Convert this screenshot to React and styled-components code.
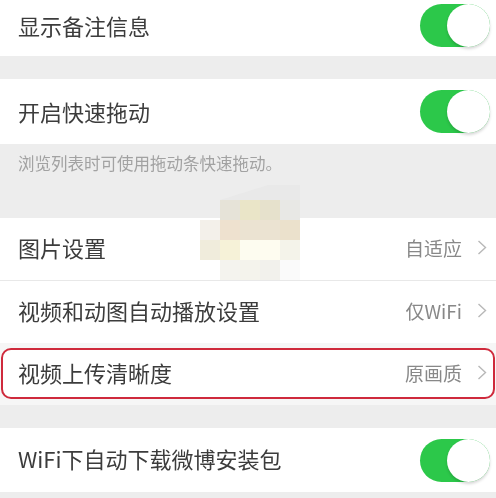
import React from "react";
import styled, { createGlobalStyle } from "styled-components";

const GlobalStyle = createGlobalStyle`
  html, body {
    margin: 0;
    padding: 0;
    background: #ededed;
  }
  body {
    font-family: "Noto Sans CJK SC", "Liberation Sans", sans-serif;
  }
`;

const Page = styled.div`
  position: relative;
  width: 496px;
  height: 498px;
  overflow: hidden;
  background: #ededed;
  filter: blur(0.55px);
`;

const Row = styled.div`
  height: ${(p) => p.$height}px;
  margin-top: ${(p) => p.$gap || 0}px;
  padding: 0 18px ${(p) => p.$lift || 0}px;
  background: #fff;
  display: flex;
  align-items: center;
  justify-content: space-between;
  box-sizing: border-box;
  border-bottom: ${(p) => (p.$line ? "1px solid #e8e8e8" : "none")};
`;

const FrameBand = styled.div`
  height: 62px;
  padding: 5px 1px 6px;
  box-sizing: border-box;
  background: #f6f6f6;
`;

const Frame = styled.div`
  height: 100%;
  padding: 0 15px;
  box-sizing: border-box;
  display: flex;
  align-items: center;
  justify-content: space-between;
  background: #fff;
  border: 2px solid #cf2a3c;
  border-radius: 10px;
`;

const Label = styled.span`
  font-size: 22px;
  color: #3c3c3c;
  margin-bottom: ${(p) => p.$raise ?? 4}px;
`;

const Caption = styled.div`
  height: 74px;
  padding: 7px 18px 0;
  box-sizing: border-box;
  font-size: 16.5px;
  line-height: 24px;
  color: #a2a2a2;
`;

const Value = styled.div`
  display: flex;
  align-items: center;
  gap: 15px;
  margin-right: -9px;
  margin-bottom: 3px;
  font-size: 19px;
  color: #888;
`;

const Chevron = styled.svg`
  width: 10px;
  height: 15px;
  fill: none;
  stroke: #b8b8b8;
  stroke-width: 1.4;
`;

const Track = styled.div`
  position: relative;
  width: 70px;
  height: 43px;
  margin-right: -12px;
  border-radius: 22px;
  background: #2cc84a;
`;

const Knob = styled.div`
  position: absolute;
  top: 0;
  right: 0;
  width: 43px;
  height: 43px;
  border-radius: 50%;
  background: #fff;
  box-shadow: 0 2px 3px rgba(0, 0, 0, 0.16);
`;

const Mosaic = styled.div`
  position: absolute;
  left: 200px;
  top: 200px;
  display: grid;
  grid-template-columns: repeat(5, 20px);
  grid-auto-rows: 20px;
`;

const Haze = styled.div`
  position: absolute;
  left: 220px;
  top: 185px;
  width: 80px;
  height: 15px;
  background: #e9e9e9;
  clip-path: polygon(0 100%, 60% 0, 100% 0, 100% 100%);
`;

const Tile = styled.div`
  background: ${(p) => p.$color};
`;

const tiles = [
  "transparent", "#e6e3d8", "#eae5c8", "#e6e1cc", "#e8e8e5",
  "#f3f0ea", "#eee1cf", "#ebe3d2", "#ebe3d2", "#ebe1cc",
  "#f0ecdc", "#f6f2d8", "#fdfcf0", "#fefcf0", "#f4f3ea",
  "transparent", "#f4f3ee", "#f4f3ec", "#f2f1ec", "#fafafa",
];

function Toggle() {
  return (
    <Track>
      <Knob />
    </Track>
  );
}

function Arrow() {
  return (
    <Chevron viewBox="0 0 10 15">
      <path d="M1.5 1 L8.5 7.5 L1.5 14" />
    </Chevron>
  );
}

function App() {
  return (
    <Page>
      <GlobalStyle />
      <Row $height={56} $lift={6}>
        <Label $raise={0}>显示备注信息</Label>
        <Toggle />
      </Row>
      <Row $height={65} $gap={23}>
        <Label $raise={2}>开启快速拖动</Label>
        <Toggle />
      </Row>
      <Caption>浏览列表时可使用拖动条快速拖动。</Caption>
      <Row $height={63} $line>
        <Label>图片设置</Label>
        <Value>
          自适应
          <Arrow />
        </Value>
      </Row>
      <Row $height={62}>
        <Label>视频和动图自动播放设置</Label>
        <Value>
          仅WiFi
          <Arrow />
        </Value>
      </Row>
      <FrameBand>
        <Frame>
          <Label>视频上传清晰度</Label>
          <Value>
            原画质
            <Arrow />
          </Value>
        </Frame>
      </FrameBand>
      <Row $height={64} $gap={23}>
        <Label>WiFi下自动下载微博安装包</Label>
        <Toggle />
      </Row>
      <Haze />
      <Mosaic>
        {tiles.map((color, i) => (
          <Tile key={i} $color={color} />
        ))}
      </Mosaic>
    </Page>
  );
}

export default App;
